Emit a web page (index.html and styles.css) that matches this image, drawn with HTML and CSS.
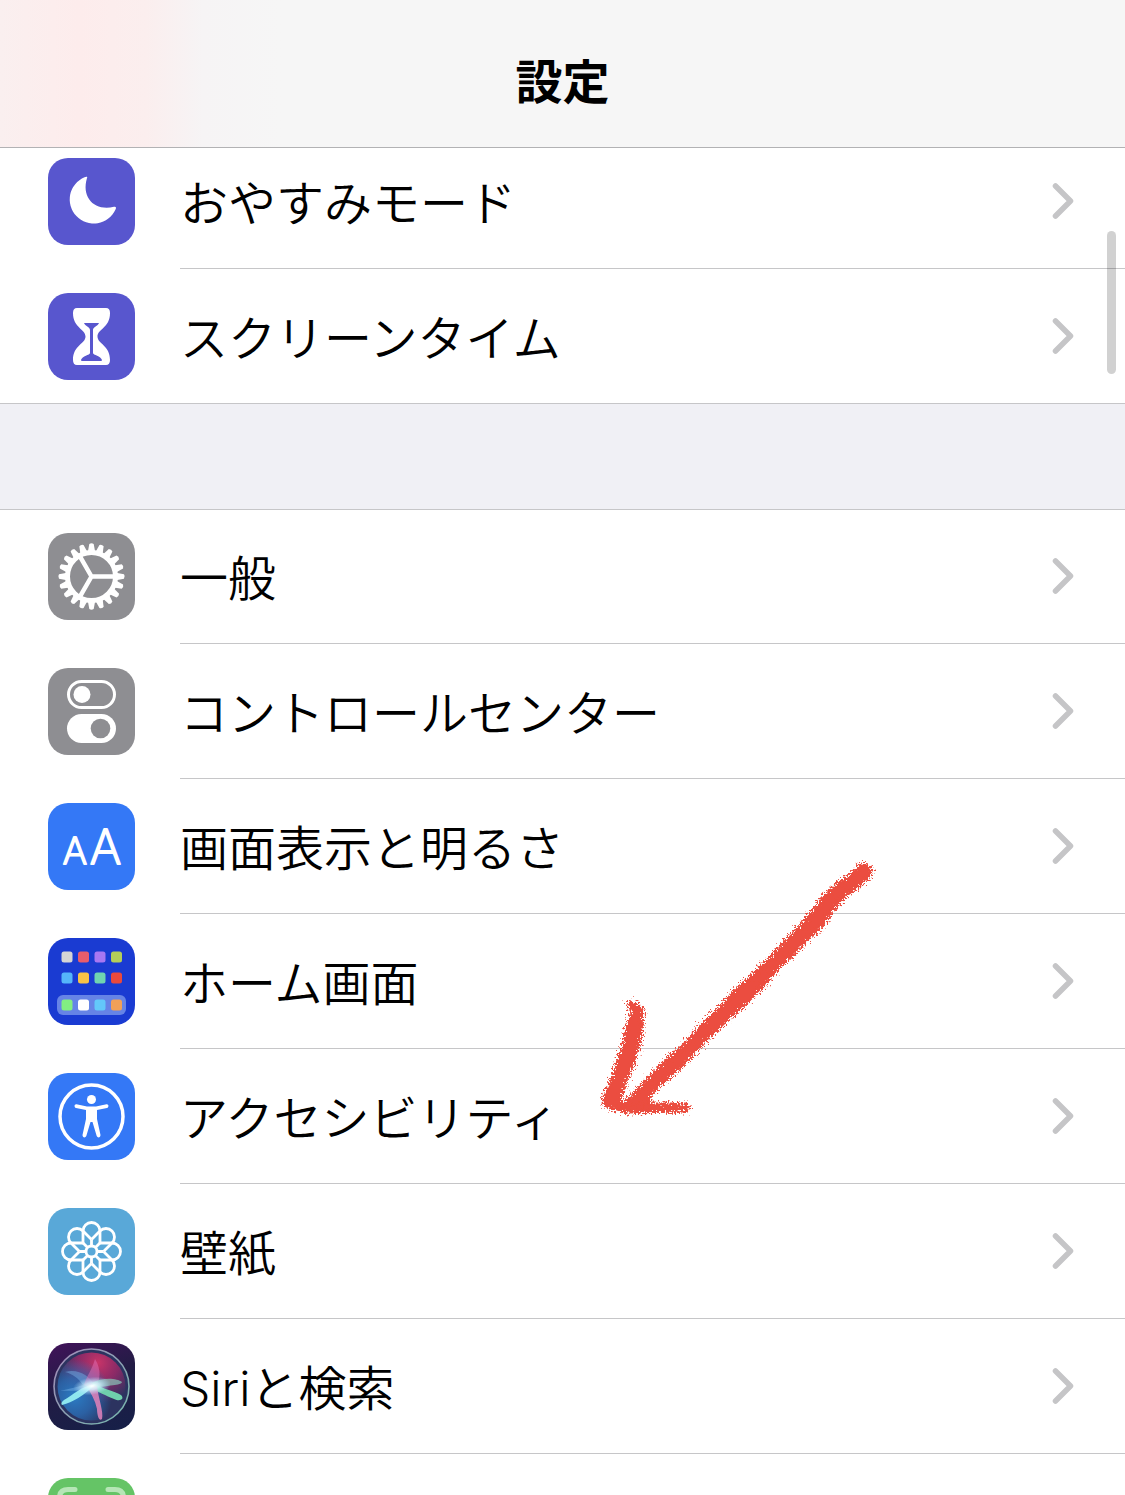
FILE: index.html
```html
<!DOCTYPE html>
<html lang="ja">
<head>
    <meta charset="UTF-8">
    <meta name="viewport" content="width=device-width, initial-scale=1.0">
    <title>設定</title>
    <link rel="stylesheet" href="styles.css">
</head>
<body>
    <svg width="0" height="0" class="defs" aria-hidden="true">
        <symbol id="chevron" viewBox="0 0 24 38">
            <path d="M4.500 4 19.500 19 4.500 34" fill="none" stroke="#c5c5c7" stroke-width="5.500" stroke-linecap="round" stroke-linejoin="round"/>
        </symbol>
    </svg>

    <header class="nav-bar">
        <h1>設定</h1>
    </header>

    <main class="settings">
        <ul class="group">
            <li>
                <a class="row" href="#">
                    <svg class="icon indigo" viewBox="0 0 87 87">
                        <path d="M39 20C40 18.500 38 18.600 36.500 19.300A24 24 0 1 0 67.500 51.500C68.500 49.500 68 48.300 66 48.800C47 53.500 33 40 39 20Z" fill="#fff"/>
                    </svg>
                    <span class="content">
                        <span class="label">おやすみモード</span>
                        <svg class="chevron"><use href="#chevron"/></svg>
                    </span>
                </a>
            </li>
            <li>
                <a class="row" href="#">
                    <svg class="icon indigo" viewBox="0 0 87 87">
                        <path d="M29 15H58Q62 15 62 20C62 35 49.500 36 49.500 43.500S62 52 62 67Q62 72 58 72H29Q25 72 25 67C25 52 37.500 51 37.500 43.500S25 35 25 20Q25 15 29 15Z" fill="#fff"/>
                        <path d="M36 30H51C50 33 45 34 45 37V60C45 62 53 63 54 67Q54 68 53 68H34Q33 68 33 67C34 63 42 62 42 60V37C42 34 37 33 36 30Z" fill="#5856ce"/>
                    </svg>
                    <span class="content">
                        <span class="label">スクリーンタイム</span>
                        <svg class="chevron"><use href="#chevron"/></svg>
                    </span>
                </a>
            </li>
        </ul>

        <ul class="group">
            <li>
                <a class="row" href="#">
                    <svg class="icon gray" viewBox="0 0 87 87">
                        <g fill="none" stroke="#fff">
                            <circle cx="43.500" cy="43.500" r="24" stroke-width="5"/>
                            <path d="M43.500 43.500H67M43.500 43.500 31.500 22.700M43.500 43.500 31.500 64.300" stroke-width="4.500"/>
                        </g>
                        <g fill="#fff">
                            <g id="teeth">
                                <path id="tooth" d="M68 39.800 76 41.300Q77.500 43.500 76 45.700L68 47.200Z"/>
                                <use href="#tooth" transform="rotate(18 43.500 43.500)"/>
                                <use href="#tooth" transform="rotate(36 43.500 43.500)"/>
                                <use href="#tooth" transform="rotate(54 43.500 43.500)"/>
                                <use href="#tooth" transform="rotate(72 43.500 43.500)"/>
                            </g>
                            <use href="#teeth" transform="rotate(90 43.500 43.500)"/>
                            <use href="#teeth" transform="rotate(180 43.500 43.500)"/>
                            <use href="#teeth" transform="rotate(270 43.500 43.500)"/>
                        </g>
                    </svg>
                    <span class="content">
                        <span class="label">一般</span>
                        <svg class="chevron"><use href="#chevron"/></svg>
                    </span>
                </a>
            </li>
            <li>
                <a class="row" href="#">
                    <svg class="icon gray" viewBox="0 0 87 87">
                        <rect x="20.500" y="13.500" width="46" height="26" rx="13" fill="none" stroke="#fff" stroke-width="3"/>
                        <circle cx="34" cy="26.500" r="8.500" fill="#fff"/>
                        <rect x="19" y="46" width="49" height="29" rx="14.500" fill="#fff"/>
                        <circle cx="52.500" cy="60.500" r="9.800" fill="#8e8e92"/>
                    </svg>
                    <span class="content">
                        <span class="label">コントロールセンター</span>
                        <svg class="chevron"><use href="#chevron"/></svg>
                    </span>
                </a>
            </li>
            <li>
                <a class="row" href="#">
                    <svg class="icon blue" viewBox="0 0 87 87">
                        <g class="letters">
                            <text x="27" y="61" font-size="37">A</text>
                            <text x="57.500" y="61" font-size="48">A</text>
                        </g>
                    </svg>
                    <span class="content">
                        <span class="label">画面表示と明るさ</span>
                        <svg class="chevron"><use href="#chevron"/></svg>
                    </span>
                </a>
            </li>
            <li>
                <a class="row" href="#">
                    <svg class="icon navy" viewBox="0 0 87 87">
                        <rect x="9" y="57" width="69" height="20" rx="6" fill="#6684e6"/>
                        <rect x="13.500" y="13.500" width="11" height="11" rx="2.500" fill="#d5d5d5"/>
                        <rect x="30" y="13.500" width="11" height="11" rx="2.500" fill="#e85d6b"/>
                        <rect x="46.500" y="13.500" width="11" height="11" rx="2.500" fill="#a877f2"/>
                        <rect x="63" y="13.500" width="11" height="11" rx="2.500" fill="#b5cf58"/>
                        <rect x="13.500" y="34.500" width="11" height="11" rx="2.500" fill="#55b5fa"/>
                        <rect x="30" y="34.500" width="11" height="11" rx="2.500" fill="#f8c347"/>
                        <rect x="46.500" y="34.500" width="11" height="11" rx="2.500" fill="#70d4b0"/>
                        <rect x="63" y="34.500" width="11" height="11" rx="2.500" fill="#ea493c"/>
                        <rect x="13.500" y="61.500" width="11" height="11" rx="2.500" fill="#82ee82"/>
                        <rect x="30" y="61.500" width="11" height="11" rx="2.500" fill="#fff"/>
                        <rect x="46.500" y="61.500" width="11" height="11" rx="2.500" fill="#63c8fa"/>
                        <rect x="63" y="61.500" width="11" height="11" rx="2.500" fill="#f0a058"/>
                    </svg>
                    <span class="content">
                        <span class="label">ホーム画面</span>
                        <svg class="chevron"><use href="#chevron"/></svg>
                    </span>
                </a>
            </li>
            <li>
                <a class="row" href="#">
                    <svg class="icon blue" viewBox="0 0 87 87">
                        <circle cx="43.500" cy="43.500" r="31.500" fill="none" stroke="#fff" stroke-width="3.500"/>
                        <circle cx="43.500" cy="26.500" r="4.500" fill="#fff"/>
                        <path d="M28.500 31.300 39 33.500H48L58.500 31.300C61 31 61 34.500 59 35L49 37V46L52.500 62C52.500 65 49.500 65 48.700 63L44.500 49H42.500L38.300 63C37.500 65 34.500 65 34.500 62L38 46V37L28 35C26 34.500 26 31 28.500 31.300Z" fill="#fff"/>
                    </svg>
                    <span class="content">
                        <span class="label">アクセシビリティ</span>
                        <svg class="chevron"><use href="#chevron"/></svg>
                    </span>
                </a>
            </li>
            <li>
                <a class="row" href="#">
                    <svg class="icon sky" viewBox="0 0 87 87">
                        <g fill="none" stroke="#fff" stroke-width="2.800" stroke-linejoin="round">
                            <circle cx="43.500" cy="43.500" r="5.500"/>
                            <path id="petal" d="M43.500 38V31.500M35 35V23A8.500 8.500 0 0 1 52 23V35"/>
                            <use href="#petal" transform="rotate(45 43.500 43.500)"/>
                            <use href="#petal" transform="rotate(90 43.500 43.500)"/>
                            <use href="#petal" transform="rotate(135 43.500 43.500)"/>
                            <use href="#petal" transform="rotate(180 43.500 43.500)"/>
                            <use href="#petal" transform="rotate(225 43.500 43.500)"/>
                            <use href="#petal" transform="rotate(270 43.500 43.500)"/>
                            <use href="#petal" transform="rotate(315 43.500 43.500)"/>
                        </g>
                    </svg>
                    <span class="content">
                        <span class="label">壁紙</span>
                        <svg class="chevron"><use href="#chevron"/></svg>
                    </span>
                </a>
            </li>
            <li>
                <a class="row" href="#">
                    <svg class="icon siri" viewBox="0 0 87 87">
                        <defs>
                            <radialGradient id="orb-pink" cx="0.600" cy="0.150" r="0.600">
                                <stop offset="0" stop-color="#c83468"/>
                                <stop offset="0.500" stop-color="#a02868" stop-opacity="0.800"/>
                                <stop offset="1" stop-color="#a02868" stop-opacity="0"/>
                            </radialGradient>
                            <radialGradient id="orb-blue" cx="0.250" cy="0.650" r="0.550">
                                <stop offset="0" stop-color="#2b7cc4"/>
                                <stop offset="0.500" stop-color="#2b6cb4" stop-opacity="0.800"/>
                                <stop offset="1" stop-color="#2673bd" stop-opacity="0"/>
                            </radialGradient>
                            <radialGradient id="orb-glow">
                                <stop offset="0" stop-color="#fff"/>
                                <stop offset="0.400" stop-color="#d5f6ff" stop-opacity="0.800"/>
                                <stop offset="1" stop-color="#b0e0ff" stop-opacity="0"/>
                            </radialGradient>
                            <linearGradient id="orb-rim" x2="1" y2="1">
                                <stop offset="0" stop-color="#a488b8"/>
                                <stop offset="1" stop-color="#74b8ac"/>
                            </linearGradient>
                        </defs>
                        <circle cx="43.500" cy="43.500" r="37.500" fill="#2c3360" stroke="url(#orb-rim)" stroke-width="1.600"/>
                        <circle cx="43.500" cy="43.500" r="34" fill="url(#orb-pink)"/>
                        <circle cx="43.500" cy="43.500" r="34" fill="url(#orb-blue)"/>
                        <path d="M17 29C30 25 42 33 46 42C34 50 24 47 12 48C20 46 30 44 35 42C30 35 25 31 17 29Z" fill="#78b4e8" opacity="0.450"/>
                        <path d="M47 16C54 27 52 38 47 46L36 42C39 32 44 27 47 16Z" fill="#e070b8" opacity="0.500"/>
                        <path d="M44 40C54 34 69 35 74 39C74 42 64 42 46 45Z" fill="#88c8b8" opacity="0.700"/>
                        <path d="M45 40C55 46 66 48 73 52C77 56 72 59 66 56C58 53 50 48 43 46Z" fill="#6fd0ac"/>
                        <path d="M39 44 49 43C50 54 56 69 54 76C51 79 49 72 49 66C47 57 43 50 39 44Z" fill="#d880b8" opacity="0.900"/>
                        <path d="M48 41C35 53 25 59 14 62Q12 60 16 57C25 52 33 43 48 41Z" fill="#8ee6ee"/>
                        <ellipse cx="44" cy="43" rx="19" ry="9" fill="url(#orb-glow)" transform="rotate(-8 44 43)"/>
                    </svg>
                    <span class="content">
                        <span class="label">Siriと検索</span>
                        <svg class="chevron"><use href="#chevron"/></svg>
                    </span>
                </a>
            </li>
            <li>
                <a class="row" href="#" aria-label="Face ID">
                    <svg class="icon green" viewBox="0 0 87 87">
                        <path d="M11.500 27V20Q11.500 11.500 20 11.500H27M60 11.500H67Q75.500 11.500 75.500 20V27M11.500 60V67Q11.500 75.500 20 75.500H27M60 75.500H67Q75.500 75.500 75.500 67V60" fill="none" stroke="#b6e6b6" stroke-width="5" stroke-linecap="round"/>
                    </svg>
                    <span class="content"></span>
                </a>
            </li>
        </ul>
    </main>

    <div class="scroll-thumb"></div>

    <!-- crayon arrow pointing at the accessibility row -->
    <svg class="arrow" viewBox="0 0 300 280" aria-hidden="true">
        <filter id="crayon" x="-10%" y="-10%" width="120%" height="120%">
            <feTurbulence type="fractalNoise" baseFrequency="0.600" numOctaves="2" seed="4" result="noise"/>
            <feDisplacementMap in="SourceGraphic" in2="noise" scale="14" xChannelSelector="R" yChannelSelector="G"/>
        </filter>
        <g fill="#eb4e3f" stroke="#eb4e3f" stroke-linejoin="round" filter="url(#crayon)">
            <path stroke-width="5" d="M272 15 280 18 279 26 267 37 256 44 247 53 238 66 230 77 217 88 202 104 187 118 172 136 154 154 140 166 122 183 106 200 90 216 74 230 60 244 56 256H34L45 243 58 230 74 213 94 196 112 176 129 160 145 142 164 124 180 109 197 91 213 74 226 59 236 45 248 34 260 27Z"/>
            <path stroke-width="3" d="M38 152 46 154 53 160 52 177 49 195 43 214 36 231 31 246 29 254H96L99 257 97 261 36 262 22 259 14 254 15 244 22 229 28 211 34 193 37 177 42 162Z"/>
        </g>
    </svg>
</body>
</html>
```

FILE: styles.css
```css
* {
    margin: 0;
    padding: 0;
    box-sizing: border-box;
}

body {
    height: 100vh;
    overflow: hidden;
    background-color: #f0f0f5;
    color: #000;
    font-family: Inter, 'Noto Sans CJK JP', sans-serif;
}

.defs {
    position: absolute;
}

.nav-bar {
    position: fixed;
    top: 0;
    left: 0;
    right: 0;
    z-index: 10;
    height: 148px;
    padding-top: 16px;
    display: flex;
    align-items: center;
    justify-content: center;
    border-bottom: 1px solid #b2b2b4;
    background: linear-gradient(90deg, #faefef 0%, #fdecec 7%, #fbeeee 13%, #f6f4f5 18%, #f6f6f6 25%);
}

.nav-bar h1 {
    font-size: 47px;
    font-weight: 700;
    line-height: 64px;
}

/* the list is scrolled a little way under the nav bar */
.settings {
    padding-top: 134px;
}

.group {
    list-style: none;
    background-color: #fff;
}

.group + .group {
    margin-top: 105px;
    box-shadow: inset 0 1px 0 #c6c6c8;
}

.row {
    display: flex;
    align-items: center;
    gap: 45px;
    padding-left: 48px;
    color: inherit;
    text-decoration: none;
}

.group li:last-child .row {
    border-bottom: 1px solid #c6c6c8;
}

.content {
    flex: 1;
    display: flex;
    align-items: center;
    justify-content: space-between;
    height: 135px;
    padding-right: 50px;
    border-bottom: 1px solid #c6c6c8;
}

.group li:last-child .content {
    height: 134px;
    border-bottom: none;
}

.label {
    padding-top: 6px;
    font-size: 48px;
    font-weight: 350;
    line-height: 64px;
}

.chevron {
    width: 24px;
    height: 38px;
}

.icon {
    width: 87px;
    height: 87px;
    flex-shrink: 0;
    border-radius: 20px;
}

.indigo {
    background-color: #5856ce;
}

.gray {
    background-color: #8e8e92;
}

.blue {
    background-color: #3478f6;
}

.navy {
    background-color: #1a3bd2;
}

.sky {
    background-color: #59a8d8;
}

.green {
    background-color: #65c466;
}

.siri {
    background: linear-gradient(160deg, #42135a 0%, #221c45 45%, #152048 100%);
}

.letters {
    fill: #fff;
    stroke: #fff;
    stroke-width: 2px;
    stroke-linejoin: round;
    font-family: Inter, sans-serif;
    font-weight: 200;
    text-anchor: middle;
}

.scroll-thumb {
    position: fixed;
    top: 231px;
    right: 9px;
    z-index: 5;
    width: 9px;
    height: 143px;
    border-radius: 5px;
    background-color: rgba(0, 0, 0, 0.18);
}

.arrow {
    position: absolute;
    top: 850px;
    left: 590px;
    width: 300px;
    height: 280px;
    pointer-events: none;
}
```
